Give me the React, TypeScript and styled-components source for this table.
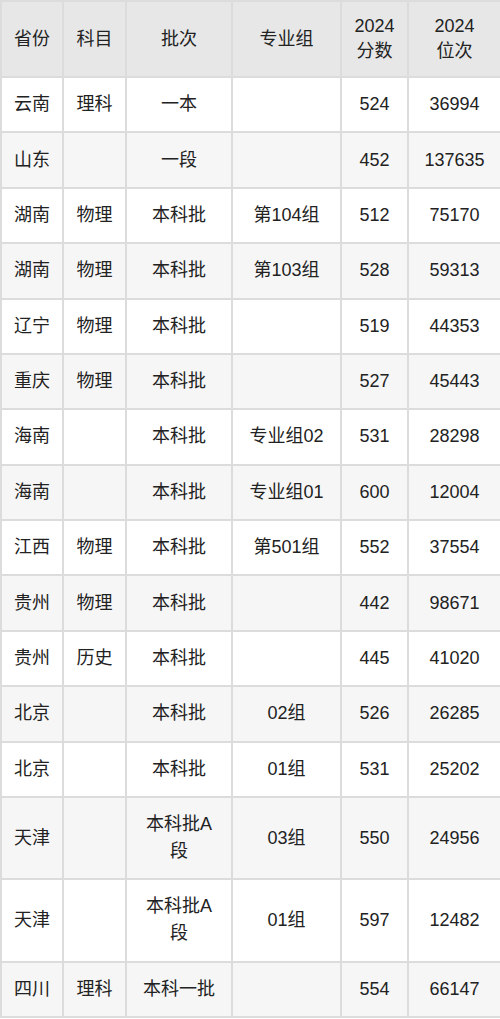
import React from 'react';
import styled, { createGlobalStyle } from 'styled-components';

const GlobalStyle = createGlobalStyle`
    html, body {
        margin: 0;
        padding: 0;
        background: #ffffff;
    }
    body {
        font-family: "Liberation Sans", "Noto Sans CJK SC", sans-serif;
    }
`;

const Table = styled.table`
    width: 500px;
    table-layout: fixed;
    border-collapse: collapse;
    color: #222222;
    font-size: 18px;
`;

const HeadCell = styled.th`
    background: #e7e7e7;
    border: 2px solid #dcdcdc;
    font-weight: normal;
    height: 74px;
    padding: 0 4px;
    line-height: 25px;
    text-align: center;
`;

const Row = styled.tr<{ $striped: boolean }>`
    background: ${ (p) => (p.$striped ? '#f6f6f6' : '#ffffff') };
`;

// the batch column wraps "本科批A段" after the A, so it keeps a wider inset
const Cell = styled.td<{ $inset: number }>`
    border: 2px solid #dcdcdc;
    padding: 13.2px ${ (p) => p.$inset }px;
    line-height: 27px;
    text-align: center;
`;

const widths = [62, 63, 106, 109, 67, 93];
const insets = [2, 2, 14, 4, 2, 2];

const headers = [
    ['省份'],
    ['科目'],
    ['批次'],
    ['专业组'],
    ['2024', '分数'],
    ['2024', '位次'],
];

const rows: string[][] = [
    ['云南', '理科', '一本', '', '524', '36994'],
    ['山东', '', '一段', '', '452', '137635'],
    ['湖南', '物理', '本科批', '第104组', '512', '75170'],
    ['湖南', '物理', '本科批', '第103组', '528', '59313'],
    ['辽宁', '物理', '本科批', '', '519', '44353'],
    ['重庆', '物理', '本科批', '', '527', '45443'],
    ['海南', '', '本科批', '专业组02', '531', '28298'],
    ['海南', '', '本科批', '专业组01', '600', '12004'],
    ['江西', '物理', '本科批', '第501组', '552', '37554'],
    ['贵州', '物理', '本科批', '', '442', '98671'],
    ['贵州', '历史', '本科批', '', '445', '41020'],
    ['北京', '', '本科批', '02组', '526', '26285'],
    ['北京', '', '本科批', '01组', '531', '25202'],
    ['天津', '', '本科批A段', '03组', '550', '24956'],
    ['天津', '', '本科批A段', '01组', '597', '12482'],
    ['四川', '理科', '本科一批', '', '554', '66147'],
];

export default function App() {
    return (
        <>
            <GlobalStyle />
            <Table>
                <colgroup>
                    { widths.map((w, i) => <col key={ i } style={ { width: w } } />) }
                </colgroup>
                <thead>
                    <tr>
                        { headers.map((lines, i) => (
                            <HeadCell key={ i }>
                                { lines.map((l, j) => <div key={ j }>{ l }</div>) }
                            </HeadCell>
                        )) }
                    </tr>
                </thead>
                <tbody>
                    { rows.map((r, i) => (
                        <Row key={ i } $striped={ i % 2 === 1 }>
                            { r.map((c, j) => <Cell key={ j } $inset={ insets[j] }>{ c }</Cell>) }
                        </Row>
                    )) }
                </tbody>
            </Table>
        </>
    );
}
